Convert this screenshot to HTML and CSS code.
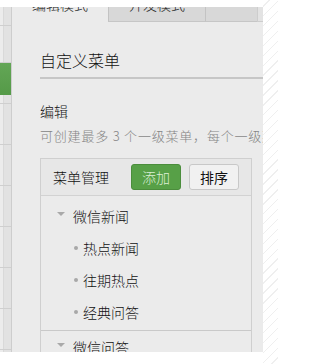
FILE: index.html
```html
<!DOCTYPE html>
<html lang="zh-CN">
<head>
<meta charset="utf-8">
<title>自定义菜单</title>
<link rel="stylesheet" href="styles.css">
</head>
<body>
<div class="shell">
  <div class="sidebar">
    <div class="sb-item sb-a"></div>
    <div class="sb-item sb-b"></div>
    <div class="sb-item sb-active"></div>
    <div class="sb-item sb-c"></div>
    <div class="sb-item"></div>
    <div class="sb-item"></div>
    <div class="sb-item"></div>
    <div class="sb-item"></div>
    <div class="sb-item"></div>
    <div class="sb-item"></div>
  </div>
  <div class="main">
    <div class="tabs">
      <div class="tab tab-active"><span class="tab-label">编辑模式</span></div>
      <div class="tab tab-off tab-2"><span class="tab-label">开发模式</span></div>
      <div class="tab tab-off tab-3"></div>
      <div class="tab tab-end"></div>
    </div>
    <div class="content">
      <h1 class="title">自定义菜单</h1>
      <h2 class="section">编辑</h2>
      <p class="hint">可创建最多 3 个一级菜单，每个一级菜单下可创建最多 5 个二级菜单</p>
      <div class="menu-box">
        <div class="menu-head">
          <span class="menu-head-label">菜单管理</span>
          <button class="btn btn-green">添加</button>
          <button class="btn btn-plain">排序</button>
        </div>
        <div class="group group-first">
          <div class="row row-parent"><span class="caret"></span>微信新闻</div>
          <div class="row row-child"><span class="dot"></span>热点新闻</div>
          <div class="row row-child"><span class="dot"></span>往期热点</div>
          <div class="row row-child"><span class="dot"></span>经典问答</div>
        </div>
        <div class="group">
          <div class="row row-parent"><span class="caret"></span>微信问答</div>
        </div>
      </div>
    </div>
  </div>
</div>
<div class="stripes"></div>
</body>
</html>
```

FILE: styles.css
```css
html, body {
  margin: 0;
  padding: 0;
}
body {
  width: 278px;
  height: 364px;
  overflow: hidden;
  display: flex;
  background: #ffffff;
  font-family: "Noto Sans CJK SC", "Noto Sans", sans-serif;
  font-weight: 300;
  color: #222;
}
.shell {
  width: 263px;
  height: 352px;
  padding-top: 7px;
  box-sizing: border-box;
  display: flex;
  flex: none;
}
.stripes {
  flex: 1;
  height: 364px;
  background: repeating-linear-gradient(135deg, #ffffff 0 4px, #efefef 4px 5px, #ffffff 5px 7px);
}
.sidebar {
  width: 11px;
  border-right: 1px solid #cdcdcd;
  background: linear-gradient(to right, #ececec 0 3px, #d9d9d9 3px 4px, #e2e2e2 4px);
  display: flex;
  flex-direction: column;
  overflow: hidden;
  flex: none;
}
.sb-item {
  height: 40px;
  border-bottom: 1px solid #cfcfcf;
  flex: none;
}
.sb-a { height: 18px; }
.sb-b { height: 36px; }
.sb-active {
  height: 32px;
  border-bottom: none;
  background: linear-gradient(to bottom, #63a656, #559a48);
}
.sb-c { height: 8px; }

.main {
  width: 251px;
  background: #ebebeb;
  overflow: hidden;
  flex: none;
}
.tabs {
  display: flex;
  height: 15px;
}
.tab {
  height: 15px;
  box-sizing: border-box;
  text-align: center;
  font-size: 14px;
  color: #222;
}
.tab-active { width: 96px; }
.tab-off {
  background: #d8d8d8;
  border-left: 1px solid #c3c3c3;
  border-bottom: 1px solid #c6c6c6;
}
.tab-2 { width: 97px; }
.tab-3 { width: 52px; }
.tab-end {
  width: 6px;
  background: #e3e3e3;
  border-left: 1px solid #cdcdcd;
  border-bottom: 1px solid #cdcdcd;
}
.tab-label {
  display: block;
  line-height: 14px;
  margin-top: -10px;
}

.content {
  padding-left: 28px;
  overflow: hidden;
}
.title {
  margin: 30px 0 0;
  padding-bottom: 9px;
  font-size: 16px;
  line-height: 16px;
  font-weight: 300;
  color: #111;
  border-bottom: 2px solid #c6c6c6;
  white-space: nowrap;
}
.section {
  margin: 25px 0 0;
  font-size: 14px;
  line-height: 14px;
  font-weight: 300;
  color: #111;
}
.hint {
  margin: 11px 0 0;
  font-size: 13px;
  line-height: 14px;
  letter-spacing: 0.8px;
  color: #858585;
  white-space: nowrap;
}
.menu-box {
  margin-top: 15px;
  width: 212px;
  box-sizing: border-box;
  border-top: 1px solid #cfcfcf;
  border-left: 1px solid #cfcfcf;
  border-right: 1px solid #cfcfcf;
  height: 200px;
}
.menu-head {
  height: 36px;
  border-bottom: 1px solid #d2d2d2;
  background: #e7e7e7;
  display: flex;
  align-items: center;
  padding-left: 12px;
}
.menu-head-label {
  font-size: 14px;
  line-height: 14px;
  color: #111;
  margin-right: 22px;
}
.btn {
  width: 50px;
  height: 26px;
  box-sizing: border-box;
  border-radius: 3px;
  font-family: inherit;
  font-weight: 300;
  font-size: 14px;
  line-height: 14px;
  padding: 0;
  margin: 0;
}
.btn-green {
  background: #57a047;
  border: 1px solid #4b8d3c;
  color: #dcefd5;
  margin-right: 8px;
}
.btn-plain {
  background: #f1f1f1;
  border: 1px solid #c8c8c8;
  color: #111;
  font-weight: 400;
}
.group {
  border-bottom: 1px solid #c9c9c9;
}
.group-first {
  padding-top: 4px;
  padding-bottom: 2px;
}
.row {
  height: 32px;
  display: flex;
  align-items: center;
  font-size: 14px;
  color: #111;
  white-space: nowrap;
}
.row-parent {
  padding-left: 16px;
}
.row-child {
  padding-left: 33px;
}
.caret {
  width: 0;
  height: 0;
  border-left: 4px solid transparent;
  border-right: 4px solid transparent;
  border-top: 4px solid #a9a9a9;
  margin-right: 8px;
  margin-top: -4px;
}
.dot {
  width: 4px;
  height: 4px;
  border-radius: 50%;
  background: #a8a8a8;
  margin-right: 5px;
}
```
